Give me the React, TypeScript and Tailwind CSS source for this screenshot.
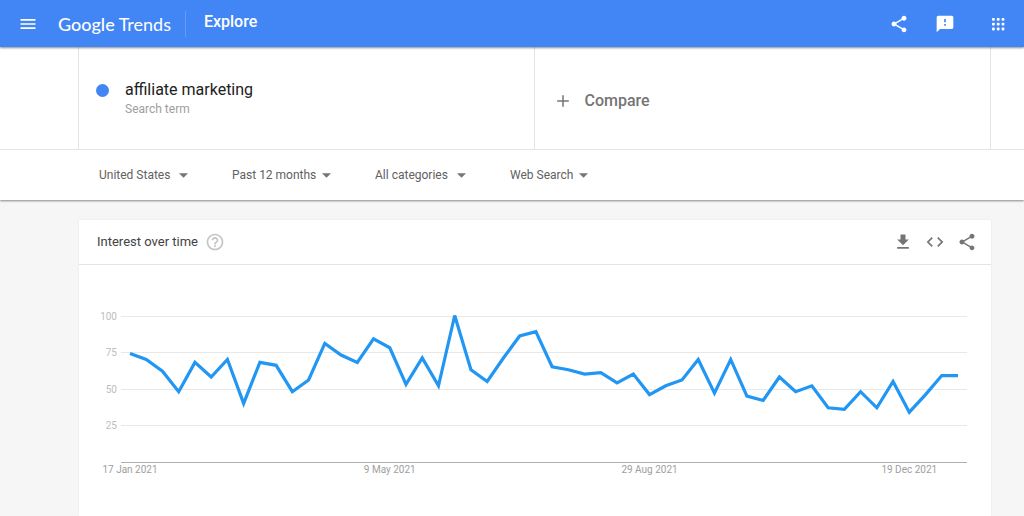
import type { ReactNode } from "react";

const weeklyInterest = [
  74, 70, 62, 48, 68, 58, 70, 40, 68, 66, 48, 56, 81, 73, 68, 84, 78, 53, 71, 52, 100, 63, 55, 71, 86, 89,
  65, 63, 60, 61, 54, 60, 46, 52, 56, 70, 47, 70, 45, 42, 58, 48, 52, 37, 36, 48, 37, 55, 34, 46, 59, 59,
];

const dateTicks = [
  { week: 0, label: "17 Jan 2021" },
  { week: 16, label: "9 May 2021" },
  { week: 32, label: "29 Aug 2021" },
  { week: 48, label: "19 Dec 2021" },
];

const filters = [
  { name: "Region", value: "United States", width: "w-[89px]" },
  { name: "Time range", value: "Past 12 months", width: "w-[99px]" },
  { name: "Category", value: "All categories", width: "w-[91px]" },
  { name: "Search type", value: "Web Search", width: "w-[78px]" },
];

const paths = {
  menu: "M3 18h18v-2H3v2zm0-5h18v-2H3v2zm0-7v2h18V6H3z",
  share:
    "M18 16.08c-.76 0-1.44.3-1.96.77L8.91 12.7c.05-.23.09-.46.09-.7s-.04-.47-.09-.7l7.05-4.11c.54.5 1.25.81 2.04.81 1.66 0 3-1.34 3-3s-1.34-3-3-3-3 1.34-3 3c0 .24.04.47.09.7L8.04 9.81C7.5 9.31 6.79 9 6 9c-1.66 0-3 1.34-3 3s1.34 3 3 3c.79 0 1.5-.31 2.04-.81l7.12 4.16c-.05.21-.08.43-.08.65 0 1.61 1.31 2.92 2.92 2.92s2.92-1.31 2.92-2.92-1.31-2.92-2.92-2.92z",
  feedback:
    "M20 2H4c-1.1 0-1.99.9-1.99 2L2 22l4-4h14c1.1 0 2-.9 2-2V4c0-1.1-.9-2-2-2zm-7 12h-2v-2h2v2zm0-4h-2V6h2v4z",
  add: "M19 12.9h-6.1V19h-1.8v-6.1H5v-1.8h6.1V5h1.8v6.1H19z",
  download: "M19 9h-4V3H9v6H5l7 7 7-7zM5 18v2h14v-2H5z",
  embed: "M9.4 16.6L4.8 12l4.6-4.6L8 6l-6 6 6 6 1.4-1.4zm5.2 0l4.6-4.6-4.6-4.6L16 6l6 6-6 6-1.4-1.4z",
  help: "M11 18h2v-2h-2v2zm1-16C6.48 2 2 6.48 2 12s4.48 10 10 10 10-4.48 10-10S17.52 2 12 2zm0 18c-4.41 0-8-3.59-8-8s3.59-8 8-8 8 3.59 8 8-3.59 8-8 8zm0-14c-2.21 0-4 1.79-4 4h2c0-1.1.9-2 2-2s2 .9 2 2c0 2-3 1.75-3 5h2c0-2.25 3-2.5 3-5 0-2.21-1.79-4-4-4z",
};

function Icon({ name, className = "size-5" }: { name: keyof typeof paths; className?: string }) {
  return (
    <svg viewBox="0 0 24 24" fill="currentColor" className={className} aria-hidden="true">
      <path d={paths[name]} />
    </svg>
  );
}

function AppsIcon() {
  return (
    <svg viewBox="0 0 14 14" fill="currentColor" className="size-3.5" aria-hidden="true">
      {[1, 5.8, 10.6].map((top) =>
        [1, 5.8, 10.6].map((left) => (
          <rect key={`${left}-${top}`} x={left} y={top} width="2.8" height="2.8" rx="0.8" />
        ))
      )}
    </svg>
  );
}

function IconButton({ label, children }: { label: string; children: ReactNode }) {
  return (
    <button type="button" aria-label={label} className="flex shrink-0 cursor-pointer items-center justify-center">
      {children}
    </button>
  );
}

function Header() {
  return (
    <header className="relative flex h-[47px] items-center bg-[#4285f4] pr-[19px] pl-[18px] text-white shadow-[0_1px_2px_rgba(0,0,0,0.45)]">
      <IconButton label="Main menu">
        <Icon name="menu" />
      </IconButton>
      <a href="#home" className="ml-5 flex items-center gap-1 font-[Lato,sans-serif] text-[18px] leading-6">
        <span className="font-medium">Google</span>
        <span>Trends</span>
      </a>
      <div className="ml-3.5 h-[26px] w-px bg-[#659cf6]" />
      <a href="#explore" className="ml-[18px] pb-1 text-base font-medium">
        Explore
      </a>
      <div className="ml-auto flex items-center">
        <IconButton label="Share">
          <Icon name="share" />
        </IconButton>
        <div className="ml-[26px] flex">
          <IconButton label="Send feedback">
            <Icon name="feedback" />
          </IconButton>
        </div>
        <div className="ml-9 flex">
          <IconButton label="Google apps">
            <AppsIcon />
          </IconButton>
        </div>
      </div>
    </header>
  );
}

function SearchTerms() {
  return (
    <section className="border-b border-[#e4e4e4] pr-[33px] pl-[78px]">
      <div className="grid h-[102px] grid-cols-2 border-x border-[#e4e4e4]">
        <div className="flex items-start border-r border-[#e4e4e4] pt-[33px] pl-[17px]">
          <span className="mt-1 size-[13px] rounded-full bg-[#4285f4]" />
          <div className="ml-4">
            <h1 className="text-base leading-5 text-[#212121]">affiliate marketing</h1>
            <p className="text-xs leading-[18px] text-[#9e9e9e]">Search term</p>
          </div>
        </div>
        <button type="button" className="flex cursor-pointer items-center gap-3 pt-1.5 pl-[18px] text-[#757575]">
          <Icon name="add" />
          <span className="text-base font-medium">Compare</span>
        </button>
      </div>
    </section>
  );
}

function Filters() {
  return (
    <div className="flex h-[50px] items-center gap-11 pl-[99px] text-xs text-[#616161]">
      {filters.map((filter) => (
        <div key={filter.name} className="relative flex items-center">
          <select aria-label={filter.name} className={`cursor-pointer appearance-none bg-transparent ${filter.width}`}>
            <option>{filter.value}</option>
          </select>
          <svg viewBox="0 0 10 5" className="pointer-events-none absolute right-0 h-[5px] w-[9px]" aria-hidden="true">
            <path d="M0 0h10L5 5z" fill="#757575" />
          </svg>
        </div>
      ))}
    </div>
  );
}

function TrendChart() {
  const x = (week: number) => 51 + (week * 828) / 51;
  const y = (value: number) => 197 - value * 1.465;
  const points = weeklyInterest.map((value, week) => `${x(week)},${y(value)}`).join(" ");

  return (
    <svg viewBox="0 0 912 251" className="w-full" role="img" aria-label="Interest over time for affiliate marketing">
      {[100, 75, 50, 25].map((value) => (
        <g key={value}>
          <line x1="42" x2="888" y1={Math.round(y(value)) + 0.5} y2={Math.round(y(value)) + 0.5} stroke="#e8e8e8" />
          <text x="38" y={y(value) + 4} textAnchor="end" fontSize="10" fill="#bdbdbd">
            {value}
          </text>
        </g>
      ))}
      <line x1="42" x2="888" y1="197.5" y2="197.5" stroke="#b0b0b0" />
      {dateTicks.map((tick) => (
        <text key={tick.label} x={x(tick.week)} y="208" textAnchor="middle" fontSize="10" fill="#9e9e9e">
          {tick.label}
        </text>
      ))}
      <polyline points={points} fill="none" stroke="#2196f3" strokeWidth="3.2" strokeMiterlimit="2.8" />
    </svg>
  );
}

export default function App() {
  return (
    <div className="flex min-h-screen flex-col bg-[#f6f6f6] font-[Roboto,sans-serif]">
      <Header />
      <div className="bg-white shadow-[0_1px_2px_rgba(0,0,0,0.45)]">
        <SearchTerms />
        <Filters />
      </div>
      <main className="flex flex-1 flex-col pt-5 pr-[33px] pl-[79px]">
        <section className="flex-1 bg-white shadow-[0_0_2px_rgba(0,0,0,0.08)]">
          <div className="flex h-[45px] items-center border-b border-[#e4e4e4] pr-3.5 pl-[18px]">
            <h2 className="text-[13px] text-[#424242]">Interest over time</h2>
            <div className="ml-[7px] flex text-[#c4c4c4]">
              <IconButton label="Help">
                <Icon name="help" />
              </IconButton>
            </div>
            <div className="ml-auto flex items-center gap-3 text-[#757575]">
              <IconButton label="Download CSV">
                <Icon name="download" />
              </IconButton>
              <IconButton label="Embed">
                <Icon name="embed" />
              </IconButton>
              <IconButton label="Share chart">
                <Icon name="share" />
              </IconButton>
            </div>
          </div>
          <TrendChart />
        </section>
      </main>
    </div>
  );
}
